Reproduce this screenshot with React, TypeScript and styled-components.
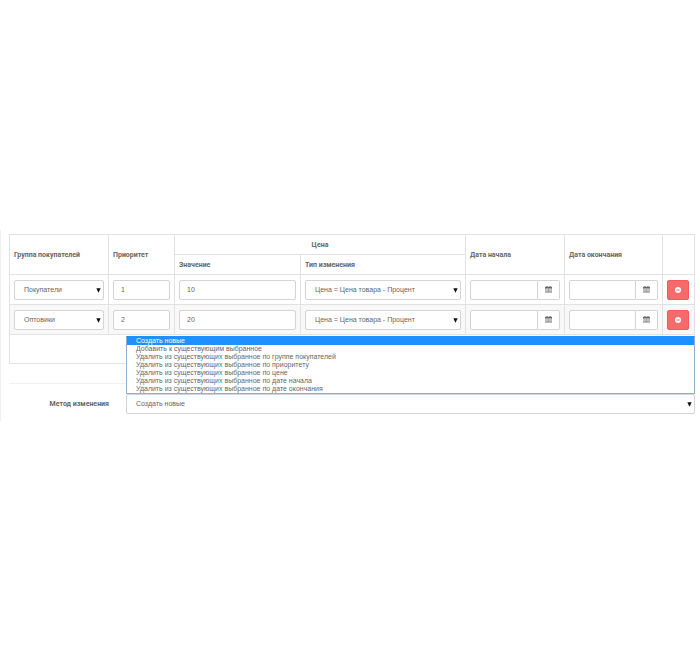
import React from "react";
import styled, { createGlobalStyle, css } from "styled-components";

const GlobalStyle = createGlobalStyle`
  *, *::before, *::after { box-sizing: border-box; }
  body {
    margin: 0;
    background: #fff;
    color: #666;
    font-family: "Liberation Sans", Arial, sans-serif;
    font-size: 7px;
    line-height: 10px;
  }
`;

const Page = styled.main`
  padding: 230px 0;
`;

const Panel = styled.form`
  padding: 4px 5px 7px 8px;
  border-left: 1px solid #efefef;
`;

const DiscountTable = styled.table`
  width: 100%;
  table-layout: fixed;
  border-collapse: collapse;
  border: 1px solid #e2e2e2;
`;

const Column = styled.col<{ $width?: number }>`
  width: ${({ $width }) => ($width ? `${$width}px` : "auto")};
`;

const HeadCell = styled.th<{ $center?: boolean }>`
  height: 20px;
  padding: 0 4px;
  border: 1px solid #e2e2e2;
  font-family: Roboto, sans-serif;
  font-weight: 700;
  text-align: ${({ $center }) => ($center ? "center" : "left")};
  white-space: nowrap;
`;

const BodyRow = styled.tr<{ $striped?: boolean }>`
  background: ${({ $striped }) => ($striped ? "#f8f8f8" : "#fff")};
`;

const Cell = styled.td`
  height: 30px;
  padding: 4px;
  border: 1px solid #e2e2e2;
  vertical-align: middle;
`;

const FootCell = styled.td`
  height: 29px;
  padding: 0;
  border: 1px solid #e2e2e2;
`;

const control = css`
  display: block;
  width: 100%;
  min-width: 0;
  height: 20px;
  margin: 0;
  border: 1px solid #d4d4d4;
  border-radius: 2px;
  background: #fff;
  color: #666;
  font: inherit;
  outline: none;
`;

const TextInput = styled.input`
  ${control}
  padding: 0 7px;
`;

const SelectBox = styled.div`
  position: relative;
`;

const NativeSelect = styled.select`
  ${control}
  padding: 0 16px 0 9px;
  appearance: none;
`;

const Arrow = styled.svg`
  position: absolute;
  top: 8px;
  right: 3px;
  width: 5px;
  height: 5px;
  pointer-events: none;
`;

const DateGroup = styled.div`
  display: flex;
`;

const DateInput = styled.input`
  ${control}
  flex: 1;
  padding: 0 7px;
  border-radius: 2px 0 0 2px;
`;

const iconButton = css`
  display: flex;
  align-items: center;
  justify-content: center;
  flex: none;
  width: 22px;
  height: 20px;
  margin: 0;
  padding: 0;
`;

const CalendarButton = styled.button`
  ${iconButton}
  border: 1px solid #d4d4d4;
  border-left: 0;
  border-radius: 0 2px 2px 0;
  background: #fff;
`;

const RemoveButton = styled.button`
  ${iconButton}
  border: 1px solid #f3595c;
  border-radius: 2px;
  background: #f56b6b;
`;

const MethodRow = styled.div`
  display: flex;
  align-items: center;
  margin-top: 19px;
  padding-top: 10px;
  border-top: 1px solid #f1f1f1;
`;

const MethodLabel = styled.label`
  width: 117px;
  padding-right: 17px;
  font-family: Roboto, sans-serif;
  font-weight: 700;
  text-align: right;
`;

const MethodControl = styled.div`
  position: relative;
  flex: 1;
`;

const OptionList = styled.ul`
  position: absolute;
  right: 0;
  bottom: 100%;
  left: 0;
  margin: 0;
  padding: 0;
  border: 1px solid #91b0cf;
  border-top-color: #1e90ff;
  background: #fff;
  list-style: none;
`;

const Option = styled.li<{ $active?: boolean }>`
  height: 8px;
  padding: 0 9px;
  background: ${({ $active }) => ($active ? "#1e90ff" : "#fff")};
  color: ${({ $active }) => ($active ? "#fff" : "#666")};
  line-height: 8px;
`;

type SelectProps = { label?: string; id?: string; value: string; options: string[] };

function Select({ label, id, value, options }: SelectProps) {
  return (
    <SelectBox>
      <NativeSelect id={id} aria-label={label} defaultValue={value}>
        {options.map((o) => (
          <option key={o}>{o}</option>
        ))}
      </NativeSelect>
      <Arrow viewBox="0 0 5 5" aria-hidden="true">
        <path d="M0.3 0.3h4.4L2.5 4.8z" fill="#111" />
      </Arrow>
    </SelectBox>
  );
}

function DateField({ label }: { label: string }) {
  return (
    <DateGroup>
      <DateInput type="text" aria-label={label} />
      <CalendarButton type="button" aria-label={`${label}: календарь`}>
        <svg width="7" height="7" viewBox="0 0 14 14" aria-hidden="true">
          <path d="M0.5 2h13v11.5H0.5z" fill="#fff" stroke="#666" />
          <path d="M0 2h14v3H0zM3 0h2v3H3zM9 0h2v3H9z" fill="#666" />
          <path d="M4 5v8M7 5v8M10 5v8M1 8h12M1 11h12" stroke="#777" />
        </svg>
      </CalendarButton>
    </DateGroup>
  );
}

const groups = ["Покупатели", "Оптовики"];
const changeType = "Цена = Цена товара - Процент";
const rows = [
  { group: "Покупатели", priority: "1", value: "10" },
  { group: "Оптовики", priority: "2", value: "20" },
];
const methods = [
  "Создать новые",
  "Добавить к существующим выбранное",
  "Удалить из существующих выбранное по группе покупателей",
  "Удалить из существующих выбранное по приоритету",
  "Удалить из существующих выбранное по цене",
  "Удалить из существующих выбранное по дате начала",
  "Удалить из существующих выбранное по дате окончания",
];

export default function App() {
  return (
    <Page>
      <GlobalStyle />
      <Panel>
        <DiscountTable>
          <colgroup>
            <Column $width={99} />
            <Column $width={66} />
            <Column $width={126} />
            <Column />
            <Column $width={99} />
            <Column $width={98} />
            <Column $width={32} />
          </colgroup>
          <thead>
            <tr>
              <HeadCell rowSpan={2}>Группа покупателей</HeadCell>
              <HeadCell rowSpan={2}>Приоритет</HeadCell>
              <HeadCell colSpan={2} $center>Цена</HeadCell>
              <HeadCell rowSpan={2}>Дата начала</HeadCell>
              <HeadCell rowSpan={2}>Дата окончания</HeadCell>
              <HeadCell rowSpan={2} />
            </tr>
            <tr>
              <HeadCell>Значение</HeadCell>
              <HeadCell>Тип изменения</HeadCell>
            </tr>
          </thead>
          <tbody>
            {rows.map((row, i) => (
              <BodyRow key={row.group} $striped={i % 2 === 1}>
                <Cell><Select label="Группа покупателей" value={row.group} options={groups} /></Cell>
                <Cell><TextInput type="text" aria-label="Приоритет" defaultValue={row.priority} /></Cell>
                <Cell><TextInput type="text" aria-label="Значение" defaultValue={row.value} /></Cell>
                <Cell><Select label="Тип изменения" value={changeType} options={[changeType]} /></Cell>
                <Cell><DateField label="Дата начала" /></Cell>
                <Cell><DateField label="Дата окончания" /></Cell>
                <Cell>
                  <RemoveButton type="button" aria-label="Удалить">
                    <svg width="6" height="6" viewBox="0 0 12 12" aria-hidden="true">
                      <circle cx="6" cy="6" r="6" fill="#fff" />
                      <path d="M2.5 6h7" stroke="#f56b6b" strokeWidth="2" />
                    </svg>
                  </RemoveButton>
                </Cell>
              </BodyRow>
            ))}
          </tbody>
          <tfoot>
            <tr>
              <FootCell colSpan={6} />
              <FootCell />
            </tr>
          </tfoot>
        </DiscountTable>
        <MethodRow>
          <MethodLabel htmlFor="method">Метод изменения</MethodLabel>
          <MethodControl>
            <Select id="method" value={methods[0]} options={methods} />
            <OptionList role="listbox" aria-label="Метод изменения">
              {methods.map((m, i) => (
                <Option key={m} role="option" aria-selected={i === 0} $active={i === 0}>{m}</Option>
              ))}
            </OptionList>
          </MethodControl>
        </MethodRow>
      </Panel>
    </Page>
  );
}
